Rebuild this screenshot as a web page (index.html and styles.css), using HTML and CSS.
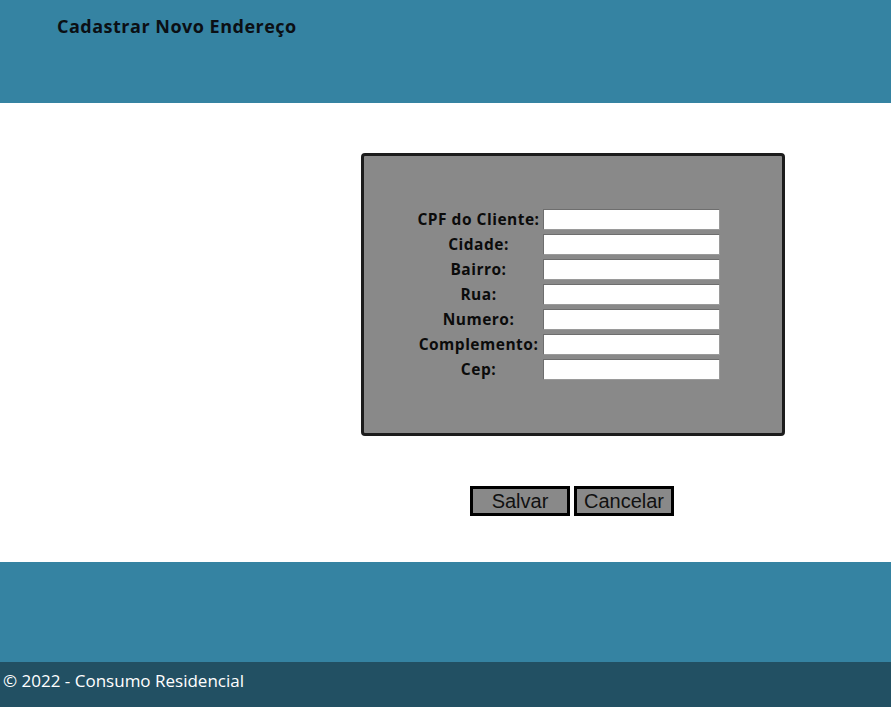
FILE: index.html
```html
<!DOCTYPE html>
<html lang="pt-BR">
<head>
<meta charset="utf-8">
<title>Cadastrar Novo Endereço</title>
<link rel="stylesheet" href="styles.css">
</head>
<body>
<header class="topbar">
  <h1 class="title">Cadastrar Novo Endereço</h1>
</header>
<main class="content">
  <div class="wrap">
    <form class="card">
      <div class="fields">
        <label class="lbl" for="cpf">CPF do Cliente:</label><input class="inp" id="cpf" type="text">
        <label class="lbl" for="cidade">Cidade:</label><input class="inp" id="cidade" type="text">
        <label class="lbl" for="bairro">Bairro:</label><input class="inp" id="bairro" type="text">
        <label class="lbl" for="rua">Rua:</label><input class="inp" id="rua" type="text">
        <label class="lbl" for="numero">Numero:</label><input class="inp" id="numero" type="text">
        <label class="lbl" for="comp">Complemento:</label><input class="inp" id="comp" type="text">
        <label class="lbl" for="cep">Cep:</label><input class="inp" id="cep" type="text">
      </div>
    </form>
    <div class="actions">
      <button class="btn" type="button">Salvar</button>
      <button class="btn" type="button">Cancelar</button>
    </div>
  </div>
</main>
<footer class="foot">
  <div class="foot-band"></div>
  <div class="foot-bar">© 2022 - Consumo Residencial</div>
</footer>
</body>
</html>
```
FILE: styles.css
```css
html, body {
  margin: 0;
  padding: 0;
  background: #fff;
}
body {
  font-family: "Open Sans", "Noto Sans", sans-serif;
}
.topbar {
  height: 103px;
  background: #3583a2;
  box-sizing: border-box;
  padding: 14px 0 0 57px;
}
.title {
  margin: 0;
  font-size: 18px;
  line-height: 24px;
  font-weight: 700;
  letter-spacing: 0.5px;
  color: #0b0f14;
}
.content {
  height: 459px;
  box-sizing: border-box;
  padding-top: 50px;
}
.wrap {
  width: 424px;
  margin-left: 361px;
  display: flex;
  flex-direction: column;
  align-items: center;
}
.card {
  box-sizing: border-box;
  width: 424px;
  height: 283px;
  margin: 0;
  background: #898989;
  border: 3px solid #1c1c1c;
  border-radius: 4px;
  padding: 53px 0 0 53px;
}
.fields {
  display: grid;
  grid-template-columns: 123px 177px;
  column-gap: 3px;
  row-gap: 4px;
  align-items: center;
}
.lbl {
  text-align: center;
  font-size: 15.5px;
  font-weight: 700;
  letter-spacing: 0.5px;
  color: #0b0b0b;
  line-height: 21px;
  white-space: nowrap;
}
.inp {
  box-sizing: border-box;
  width: 177px;
  height: 21px;
  margin: 0;
  padding: 0 2px;
  border: 1px solid #6e6e6e;
  border-right-color: #9a9a9a;
  border-bottom-color: #9a9a9a;
  background: #fff;
}
.actions {
  display: flex;
  gap: 4px;
  margin-top: 50px;
  margin-right: 2px;
}
.btn {
  box-sizing: border-box;
  width: 100px;
  height: 30px;
  margin: 0;
  padding: 0;
  border: 3px solid #000;
  background: #898989;
  font-family: "Liberation Sans", Arial, sans-serif;
  font-size: 20px;
  color: #111;
  line-height: 24px;
}
.foot-band {
  height: 100px;
  background: #3583a2;
}
.foot-bar {
  height: 45px;
  background: #225063;
  color: #fff;
  font-size: 17px;
  font-weight: 500;
  line-height: 20px;
  padding: 9px 0 0 3px;
  box-sizing: border-box;
}
```
